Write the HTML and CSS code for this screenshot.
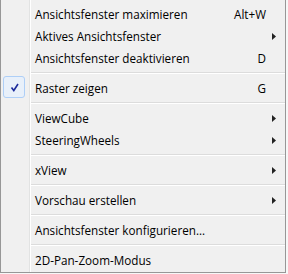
FILE: index.html
```html
<!DOCTYPE html>
<html lang="de">
<head>
    <meta charset="UTF-8">
    <meta name="viewport" content="width=device-width, initial-scale=1.0">
    <title>Ansichtsfenster</title>
    <link rel="stylesheet" href="styles.css">
</head>
<body>
    <div class="menu">
        <div class="item"><span class="label">Ansichtsfenster maximieren</span><span class="key">Alt+W</span><span class="sub"></span></div>
        <div class="item"><span class="label">Aktives Ansichtsfenster</span><span class="key"></span><span class="sub"><svg width="4" height="7" viewBox="0 0 4 7"><polygon points="0,0 4,3.5 0,7" /></svg></span></div>
        <div class="item"><span class="label">Ansichtsfenster deaktivieren</span><span class="key">D</span><span class="sub"></span></div>
        <div class="sep"></div>
        <div class="item checked">
            <span class="check"><svg width="9" height="9" viewBox="0 0 9 9"><path d="M1.5 4.5 L3.8 7.5 L8 1" fill="none" stroke="#1b2a9c" stroke-width="1.6" /></svg></span>
            <span class="label">Raster zeigen</span><span class="key">G</span><span class="sub"></span>
        </div>
        <div class="sep"></div>
        <div class="item"><span class="label">ViewCube</span><span class="key"></span><span class="sub"><svg width="4" height="7" viewBox="0 0 4 7"><polygon points="0,0 4,3.5 0,7" /></svg></span></div>
        <div class="item"><span class="label">SteeringWheels</span><span class="key"></span><span class="sub"><svg width="4" height="7" viewBox="0 0 4 7"><polygon points="0,0 4,3.5 0,7" /></svg></span></div>
        <div class="sep"></div>
        <div class="item"><span class="label">xView</span><span class="key"></span><span class="sub"><svg width="4" height="7" viewBox="0 0 4 7"><polygon points="0,0 4,3.5 0,7" /></svg></span></div>
        <div class="sep"></div>
        <div class="item"><span class="label">Vorschau erstellen</span><span class="key"></span><span class="sub"><svg width="4" height="7" viewBox="0 0 4 7"><polygon points="0,0 4,3.5 0,7" /></svg></span></div>
        <div class="sep"></div>
        <div class="item"><span class="label">Ansichtsfenster konfigurieren...</span><span class="key"></span><span class="sub"></span></div>
        <div class="sep"></div>
        <div class="item"><span class="label">2D-Pan-Zoom-Modus</span><span class="key"></span><span class="sub"></span></div>
    </div>
</body>
</html>
```

FILE: styles.css
```css
body {
    margin: 0;
    background-color: #f7f7f7;
    font-family: 'Open Sans', 'Noto Sans', sans-serif;
    font-size: 11.7px;
    color: #000;
}

.menu {
    width: 286px;
    height: 273px;
    padding-top: 3px;
    border-left: 1px solid #979797;
    border-right: 1px solid #979797;
    border-bottom: 1px solid #979797;
    background-color: #f0f0f0;
    background-image: linear-gradient(to right, transparent 28px, #e2e3e3 28px, #e2e3e3 29px, #fff 29px, #fff 30px, transparent 30px);
    display: flex;
    flex-direction: column;
    box-sizing: border-box;
}

.item {
    height: 22px;
    display: flex;
    align-items: center;
    padding-left: 34px;
    position: relative;
}

.label {
    flex: 1;
    white-space: nowrap;
}

.key {
    text-align: right;
}

.sub {
    width: 19px;
    display: flex;
    align-items: center;
    padding-left: 6px;
    box-sizing: border-box;
}

.sub svg {
    fill: #222;
}

.sep {
    height: 8px;
    margin-left: 30px;
    display: flex;
    flex-direction: column;
    justify-content: center;
}

.sep::before {
    content: "";
    height: 1px;
    background-color: #dcdcdc;
    border-bottom: 1px solid #fff;
}

.check {
    position: absolute;
    left: 2px;
    top: -1px;
    width: 20px;
    height: 20px;
    border: 1px solid #aecff7;
    border-radius: 3px;
    background-color: #e8f0fa;
    display: flex;
    align-items: center;
    justify-content: center;
}
```
